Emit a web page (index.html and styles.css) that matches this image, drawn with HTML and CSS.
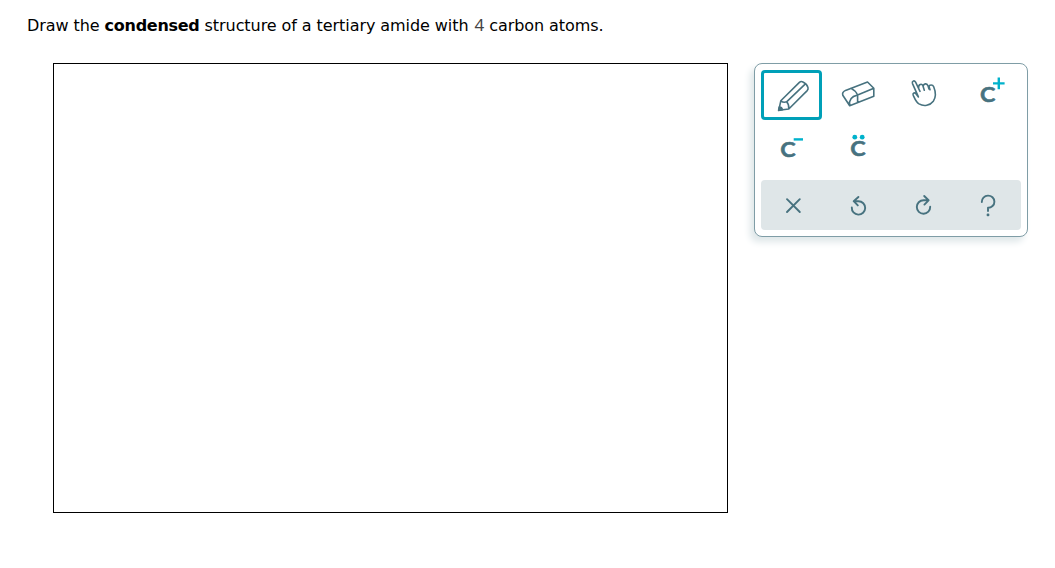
FILE: index.html
```
<!DOCTYPE html>
<html lang="en">

<head>
  <meta charset="UTF-8">
  <title>Condensed structure</title>
  <link rel="stylesheet" href="styles.css">
</head>

<body>
  <p class="question">Draw the <b>condensed</b> structure of a tertiary amide with <span class="number">4</span> carbon atoms.</p>

  <div class="editor">
    <div class="canvas"></div>

    <div class="toolbox">
      <div class="tools">
        <!-- pencil -->
        <div class="tool selected">
          <svg class="icon" viewBox="0 0 65 50">
            <path d="M17.8 40.2L19.8 30.8L38.4 12.4Q40 10.8 42 12Q46 14 47 17.6Q47.4 19.2 46.2 20.6L27.8 39Z M19.8 30.8Q22.5 33 25.6 31.8Q28.2 34.5 27.8 39 M25.6 31.8L44.4 13.8"/>
            <path class="lead" d="M17.6 40.5L18.2 37Q21 37 21.4 39.8Z"/>
          </svg>
        </div>
        <!-- eraser -->
        <div class="tool">
          <svg class="icon" viewBox="0 0 65 50">
            <path d="M23.7 35.8L47.8 26.2V18.3L41.5 12L19.5 20.4Q15.8 22.3 16.8 25.2Z M23.7 35.8Q22 27.2 31.6 25L47.8 18.3 M25 18.4Q29.5 20.5 31.6 25V32.7"/>
          </svg>
        </div>
        <!-- hand -->
        <div class="tool">
          <svg class="icon" viewBox="0 0 65 50">
            <path d="M29 21.3L24.6 12.2C23.2 9.8 20.6 11.2 21.5 13.6L27.4 26.9L24.8 23.6C23.2 22 21.4 23.4 22.2 25.2C24 29.2 25 32 28 33.9C33 36.8 39 35.5 42.3 31.2C45.6 26.5 44.6 21.5 42.7 16.8C41.7 14.4 38.4 14.4 38 16.6L39 19.8 M27.6 18C27.3 14 30.8 13.2 31.9 15.8L33.3 20.2 M32.2 16.4C32.5 13.4 35.6 13 36.9 15.6L38 19"/>
          </svg>
        </div>
        <!-- positive charge -->
        <div class="tool">
          <svg class="icon" viewBox="0 0 65 50">
            <text x="24" y="31.5" textLength="15.4" lengthAdjust="spacingAndGlyphs">C</text>
            <path class="mark" d="M37 13.4H48.6M42.8 7.6V19.2"/>
          </svg>
        </div>
        <!-- negative charge -->
        <div class="tool">
          <svg class="icon" viewBox="0 0 65 50">
            <text x="19.2" y="31.5" textLength="15.4" lengthAdjust="spacingAndGlyphs">C</text>
            <path class="mark" d="M32.7 14.4H42"/>
          </svg>
        </div>
        <!-- lone pair -->
        <div class="tool">
          <svg class="icon" viewBox="0 0 65 50">
            <text x="24.2" y="30.5" textLength="15.4" lengthAdjust="spacingAndGlyphs">C</text>
            <circle class="dot" cx="28.8" cy="12.2" r="2.4"/>
            <circle class="dot" cx="36.2" cy="12.2" r="2.4"/>
          </svg>
        </div>
      </div>

      <div class="actions">
        <!-- clear -->
        <div class="tool">
          <svg class="icon bold" viewBox="0 0 65 50">
            <path d="M26 19.2L38.8 32M38.8 19.2L26 32"/>
          </svg>
        </div>
        <!-- undo -->
        <div class="tool">
          <svg class="icon bold" viewBox="0 0 65 50">
            <path d="M25.8 27.5A6.7 6.7 0 1 0 32.5 21.2H27.7M32.4 17L27.7 21.2L31.8 25.4"/>
          </svg>
        </div>
        <!-- redo -->
        <div class="tool">
          <svg class="icon bold" viewBox="0 0 65 50">
            <path d="M39.2 26.8A6.7 6.7 0 1 1 32.5 20.3H37.6M33.2 16L37.6 20.3L33.4 24.6"/>
          </svg>
        </div>
        <!-- help -->
        <div class="tool">
          <svg class="icon bold" viewBox="0 0 65 50">
            <path d="M25.8 22A6.3 6.1 0 1 1 32 27.8V31"/>
            <rect class="lead" x="31.6" y="34.4" width=".8" height=".8"/>
          </svg>
        </div>
      </div>
    </div>
  </div>
</body>

</html>
```
FILE: styles.css
```
* {
  box-sizing: border-box;
}
body {
  margin: 0;
  background: #fff;
  font-family: Verdana, "DejaVu Sans", sans-serif;
}
.question {
  margin: 0;
  padding: 15px 0 0 27px;
  height: 63px;
  font-size: 16px;
  line-height: 20px;
  letter-spacing: -0.07px;
  white-space: nowrap;
  color: #000;
}
.question b {
  letter-spacing: -0.27px;
}
.number {
  margin-left: 1px;
  font-family: "Noto Sans", sans-serif;
  font-size: 17px;
  color: #444;
}

.editor {
  display: flex;
  align-items: flex-start;
  gap: 26px;
  padding-left: 53px;
}
.canvas {
  width: 675px;
  height: 450px;
  border: 1px solid #000;
}

/* tool palette */
.toolbox {
  width: 274px;
  height: 174px;
  padding: 6px;
  border: 1px solid #7f9da6;
  border-radius: 8px;
  background: #fff;
  box-shadow: -4px 5px 7px #dfe7e9;
}
.tools,
.actions {
  display: grid;
  grid-template-columns: repeat(4, 65px);
}
.tools {
  grid-auto-rows: 50px;
  row-gap: 5px;
  margin-bottom: 5px;
}
.actions {
  border-radius: 4px;
  background: #dfe6e8;
}
.tool {
  height: 50px;
}
.selected {
  width: 61px;
  border-radius: 4px;
  box-shadow: inset 0 0 0 3px #00a0b8;
}

/* icons */
.icon {
  display: block;
  width: 65px;
  height: 50px;
  fill: none;
  stroke: #47727f;
  stroke-width: 1.6;
  stroke-linecap: round;
  stroke-linejoin: round;
}
.bold {
  stroke-width: 1.9;
}
.icon text {
  fill: #47727f;
  stroke: #47727f;
  stroke-width: 0.5;
  font: bold 20px Lato, sans-serif;
}
.icon .lead {
  fill: #47727f;
}
.icon .mark {
  stroke: #00b2cc;
  stroke-width: 2.4;
  stroke-linecap: butt;
}
.icon .dot {
  fill: #00b2cc;
  stroke: none;
}
```
